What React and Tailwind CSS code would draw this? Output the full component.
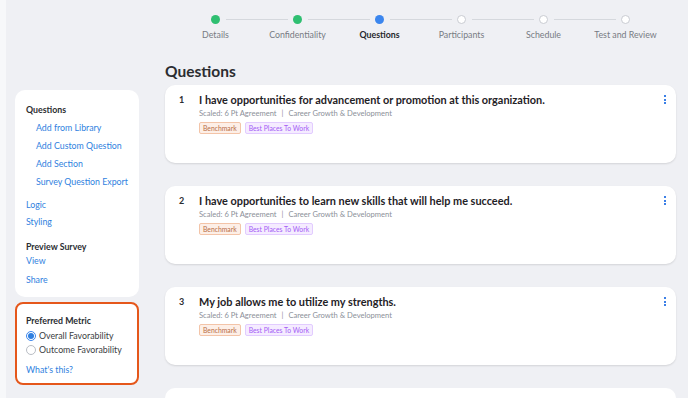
import React from "react";

const steps = [
  { label: "Details", state: "done" },
  { label: "Confidentiality", state: "done" },
  { label: "Questions", state: "current" },
  { label: "Participants", state: "todo" },
  { label: "Schedule", state: "todo" },
  { label: "Test and Review", state: "todo" },
];

const questions = [
  { n: 1, t: "I have opportunities for advancement or promotion at this organization." },
  { n: 2, t: "I have opportunities to learn new skills that will help me succeed." },
  { n: 3, t: "My job allows me to utilize my strengths." },
];

function Dot({ state }) {
  if (state === "done") return <div className="w-[9px] h-[9px] rounded-full bg-[#2fbf71]" />;
  if (state === "current") return <div className="w-[9px] h-[9px] rounded-full bg-[#3b86ee]" />;
  return <div className="w-[9px] h-[9px] rounded-full bg-white border border-[#c9ccd2]" />;
}

function Card({ q }) {
  return (
    <div className="relative bg-white rounded-[10px] shadow-[0_1px_2px_rgba(0,0,0,0.12)] h-[78px] flex pt-[8px] pl-[14px] pr-[10px]">
      <div className="w-[20px] text-[9px] font-bold text-[#2b2d31] leading-[14px]">{q.n}</div>
      <div className="flex flex-col">
        <div className="text-[10.9px] font-bold text-[#1f2226] leading-[14px]">{q.t}</div>
        <div className="text-[7.6px] text-[#8c9099] leading-[11px] mt-[1px]">
          Scaled: 6 Pt Agreement <span className="mx-[3px]">|</span> Career Growth &amp; Development
        </div>
        <div className="flex gap-[4px] mt-[3px]">
          <span className="h-[12px] px-[3px] flex items-center rounded-[2px] border border-[#f3c4a8] bg-[#fdefe7] text-[6.8px] text-[#b86e47]">Benchmark</span>
          <span className="h-[12px] px-[3px] flex items-center rounded-[2px] border border-[#e2ccff] bg-[#f5ecff] text-[6.8px] text-[#a45ef5]">Best Places To Work</span>
        </div>
      </div>
      <div className="absolute right-[10px] top-[10px] flex flex-col gap-[1.5px]">
        <div className="w-[2px] h-[2px] bg-[#3b7fe6]" />
        <div className="w-[2px] h-[2px] bg-[#3b7fe6]" />
        <div className="w-[2px] h-[2px] bg-[#3b7fe6]" />
      </div>
    </div>
  );
}

export default function App() {
  return (
    <div className="w-[688px] h-[398px] overflow-hidden bg-[#eff0f4] flex" style={{ fontFamily: "Lato, 'Open Sans', sans-serif" }}>
      <div className="w-[6px] bg-[#f7f8fa] shrink-0" />
      <div className="w-[124px] ml-[9px] pt-[90px] flex flex-col gap-[5px] shrink-0">
        <div className="bg-white rounded-[10px] h-[207px] pl-[11px] pt-[14px] flex flex-col text-[8.8px] leading-[12px]">
          <div className="font-bold text-[#2b2d31]">Questions</div>
          <div className="pl-[10px] flex flex-col text-[#2f7fe0]">
            <div className="mt-[6px]">Add from Library</div>
            <div className="mt-[6px]">Add Custom Question</div>
            <div className="mt-[6px]">Add Section</div>
            <div className="mt-[6px]">Survey Question Export</div>
          </div>
          <div className="text-[#2f7fe0] mt-[11px]">Logic</div>
          <div className="text-[#2f7fe0] mt-[5px]">Styling</div>
          <div className="font-bold text-[#2b2d31] mt-[13px]">Preview Survey</div>
          <div className="text-[#2f7fe0] mt-[2px]">View</div>
          <div className="text-[#2f7fe0] mt-[7px]">Share</div>
        </div>
        <div className="bg-white rounded-[8px] border-2 border-[#e5571b] h-[83px] pl-[9px] pt-[11px] flex flex-col text-[8.8px] leading-[12px]">
          <div className="font-bold text-[#2b2d31]">Preferred Metric</div>
          <div className="flex items-center gap-[3px] mt-[3px] text-[#3a3d42]">
            <div className="w-[10px] h-[10px] rounded-full border border-[#3b86ee] flex items-center justify-center">
              <div className="w-[6px] h-[6px] rounded-full bg-[#2f7fe0]" />
            </div>
            <span>Overall Favorability</span>
          </div>
          <div className="flex items-center gap-[3px] mt-[2px] text-[#3a3d42]">
            <div className="w-[10px] h-[10px] rounded-full border border-[#b9bdc4] bg-white" />
            <span>Outcome Favorability</span>
          </div>
          <div className="text-[#2f7fe0] mt-[8px]">What's this?</div>
        </div>
      </div>
      <div className="w-[511px] ml-[26px] shrink-0 flex flex-col">
        <div className="flex justify-center pt-[15px]">
          {steps.map((s, i) => (
            <div key={s.label} className="w-[82px] flex flex-col items-center relative">
              <Dot state={s.state} />
              {i < steps.length - 1 && (
                <div className="absolute top-[4px] left-[51px] w-[62px] h-[1px] bg-[#d5d8dd]" />
              )}
              <div className={"mt-[5px] text-[8.8px] leading-[12px] whitespace-nowrap " + (s.state === "current" ? "font-bold text-[#26282c]" : "text-[#777b83]")}>
                {s.label}
              </div>
            </div>
          ))}
        </div>
        <div className="mt-[20px] text-[15.5px] font-bold text-[#2b2d31] leading-[20px]">Questions</div>
        <div className="mt-[4px] flex flex-col gap-[23px]">
          {questions.map((q) => (
            <Card key={q.n} q={q} />
          ))}
          <div className="bg-white rounded-[10px] h-[78px] shrink-0" />
        </div>
      </div>
    </div>
  );
}
